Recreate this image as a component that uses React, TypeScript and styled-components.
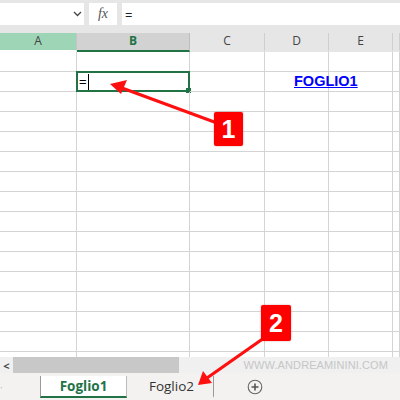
import React, { FunctionComponent } from "react";
import styled, { createGlobalStyle } from "styled-components";

const GlobalStyle = createGlobalStyle`
  html, body {
    margin: 0;
    padding: 0;
    background: #ffffff;
  }
  body {
    font-family: "Open Sans", "Liberation Sans", sans-serif;
  }
`;

const COLS = [
  { label: "A", width: 77 },
  { label: "B", width: 113 },
  { label: "C", width: 75 },
  { label: "D", width: 64 },
  { label: "E", width: 64 },
  { label: "", width: 7 },
];

const ROW_COUNT = 16;

const Sheet = styled.div`
  position: relative;
  width: 400px;
  height: 400px;
  overflow: hidden;
  display: flex;
  flex-direction: column;
`;

const FormulaBar = styled.div`
  height: 33px;
  box-sizing: border-box;
  padding: 3px 0 8px;
  background: #e6e6e6;
  display: flex;
  gap: 5px;
`;

const NameBox = styled.div`
  width: 84px;
  background: #ffffff;
  display: flex;
  align-items: center;
  justify-content: flex-end;
  padding-right: 2px;
  box-sizing: border-box;
`;

const FxBox = styled.div`
  width: 28px;
  background: #ffffff;
  display: flex;
  align-items: center;
  justify-content: center;
  font-family: "Liberation Serif", serif;
  font-style: italic;
  font-size: 14px;
  color: #555;
`;

const FormulaInput = styled.div`
  flex: 1;
  background: #ffffff;
  display: flex;
  align-items: center;
  padding-left: 3px;
  font-size: 13px;
  color: #222;
  padding-top: 2px;
`;

const HeaderRow = styled.div`
  display: flex;
  height: 19px;
  background: #e6e6e6;
`;

const HeaderCell = styled.div<{ $w: number; $state?: "active" | "sel" }>`
  width: ${(p) => p.$w}px;
  flex: none;
  box-sizing: border-box;
  display: flex;
  align-items: center;
  justify-content: center;
  font-size: 12px;
  padding-bottom: 2px;
  color: ${(p) => (p.$state === "active" ? "#217346" : "#444")};
  font-weight: ${(p) => (p.$state === "active" ? 700 : 400)};
  background: ${(p) =>
    p.$state === "active" ? "#d2d2d2" : p.$state === "sel" ? "#9fd5b7" : "#e6e6e6"};
  border-right: 1px solid
    ${(p) => (p.$state === "sel" ? "#c6c6c6" : p.$state ? "#bdbdbd" : "#cfcfcf")};
  border-bottom: 2px solid
    ${(p) => (p.$state === "active" ? "#217346" : p.$state === "sel" ? "#ffffff" : "#e6e6e6")};
`;

const Grid = styled.div`
  height: 305px;
  overflow: hidden;
`;

const Row = styled.div`
  display: flex;
  height: 20px;
`;

const Cell = styled.div<{ $w: number }>`
  position: relative;
  width: ${(p) => p.$w}px;
  flex: none;
  box-sizing: border-box;
  border-right: 1px solid #d4d4d4;
  border-bottom: 1px solid #d4d4d4;
  font-family: "Liberation Sans", Arial, sans-serif;
  font-size: 13px;
  white-space: nowrap;
`;

const ActiveCell = styled.div`
  position: absolute;
  left: -1px;
  top: -1px;
  width: 114px;
  height: 21px;
  box-sizing: border-box;
  border: 2px solid #217346;
  display: flex;
  align-items: center;
  padding-left: 1px;
  font-size: 13px;
  color: #000;
  &::after {
    content: "";
    position: absolute;
    right: -3px;
    bottom: -3px;
    width: 5px;
    height: 5px;
    background: #217346;
  }
`;

const Caret = styled.span`
  display: inline-block;
  width: 1px;
  height: 16px;
  background: #000;
  margin-left: 1px;
`;

const Link = styled.a`
  position: absolute;
  left: 29px;
  top: 1px;
  color: #0000ff;
  font-weight: 700;
  font-size: 14.5px;
  text-decoration: underline;
`;

const ScrollRow = styled.div`
  height: 16px;
  display: flex;
  background: #f0f0f0;
  align-items: stretch;
`;

const ScrollArrow = styled.div`
  width: 13px;
  display: flex;
  align-items: center;
  justify-content: center;
  color: #444;
  font-size: 11px;
  font-weight: 700;
`;

const ScrollThumb = styled.div`
  width: 166px;
  background: #c8c8c8;
`;

const Watermark = styled.div`
  flex: 1;
  display: flex;
  align-items: center;
  justify-content: flex-end;
  padding-right: 12px;
  font-family: "Liberation Sans", Arial, sans-serif;
  font-size: 11px;
  letter-spacing: 0.1px;
  color: #c6c6c6;
`;

const TabRow = styled.div`
  flex: 1;
  display: flex;
  background: #f3f2f1;
  align-items: stretch;
`;

const TabLead = styled.div`
  width: 40px;
  color: #bbb;
  font-size: 10px;
  display: flex;
  align-items: center;
`;

const Tab = styled.div<{ $active?: boolean }>`
  width: 87px;
  box-sizing: border-box;
  display: flex;
  align-items: center;
  justify-content: center;
  font-size: 13.5px;
  margin: 3px 0 2px;
  padding-left: ${(p) => (p.$active ? 0 : 3)}px;
  color: ${(p) => (p.$active ? "#217346" : "#333")};
  font-weight: ${(p) => (p.$active ? 700 : 400)};
  background: ${(p) => (p.$active ? "#ffffff" : "transparent")};
  border-left: ${(p) => (p.$active ? "1px solid #999" : "none")};
  border-bottom: 2px solid ${(p) => (p.$active ? "#217346" : "transparent")};
  border-right: 1px solid ${(p) => (p.$active ? "#bbb" : "#999")};
`;

const AddSheet = styled.div`
  width: 82px;
  display: flex;
  align-items: center;
  justify-content: center;
`;

const Badge = styled.div<{ $x: number; $y: number; $w: number; $h: number }>`
  position: absolute;
  left: ${(p) => p.$x}px;
  top: ${(p) => p.$y}px;
  width: ${(p) => p.$w}px;
  height: ${(p) => p.$h}px;
  background: #ff0000;
  border-radius: 2px;
  color: #ffffff;
  font-family: "Liberation Sans", Arial, sans-serif;
  font-weight: 700;
  font-size: 25px;
  display: flex;
  align-items: center;
  justify-content: center;
  box-shadow: 0 0 2px rgba(160, 0, 0, 0.4);
`;

const Overlay = styled.svg`
  position: absolute;
  left: 0;
  top: 0;
  pointer-events: none;
`;

const Chevron = () => (
  <svg width="9" height="6" viewBox="0 0 9 6">
    <path d="M1 1 L4.5 4.5 L8 1" fill="none" stroke="#444" strokeWidth="1.3" />
  </svg>
);

const PlusCircle = () => (
  <svg width="16" height="16" viewBox="0 0 16 16">
    <circle cx="8" cy="8" r="6.8" fill="none" stroke="#666" strokeWidth="1.1" />
    <path d="M8 4.5 V11.5 M4.5 8 H11.5" stroke="#555" strokeWidth="1.6" />
  </svg>
);

const App: FunctionComponent = () => {
  return (
    <Sheet>
      <GlobalStyle />
      <FormulaBar>
        <NameBox>
          <Chevron />
        </NameBox>
        <FxBox>fx</FxBox>
        <FormulaInput>=</FormulaInput>
      </FormulaBar>
      <HeaderRow>
        {COLS.map((c, i) => (
          <HeaderCell
            key={i}
            $w={c.width}
            $state={i === 0 ? "sel" : i === 1 ? "active" : undefined}
          >
            {c.label}
          </HeaderCell>
        ))}
      </HeaderRow>
      <Grid>
        {Array.from({ length: ROW_COUNT }).map((_, r) => (
          <Row key={r}>
            {COLS.map((c, i) => (
              <Cell key={i} $w={c.width}>
                {r === 1 && i === 1 && (
                  <ActiveCell>
                    =<Caret />
                  </ActiveCell>
                )}
                {r === 1 && i === 3 && <Link href="#">FOGLIO1</Link>}
              </Cell>
            ))}
          </Row>
        ))}
      </Grid>
      <ScrollRow>
        <ScrollArrow>&lt;</ScrollArrow>
        <ScrollThumb />
        <Watermark>WWW.ANDREAMININI.COM</Watermark>
      </ScrollRow>
      <TabRow>
        <TabLead>·</TabLead>
        <Tab $active>Foglio1</Tab>
        <Tab>Foglio2</Tab>
        <AddSheet>
          <PlusCircle />
        </AddSheet>
      </TabRow>

      <Overlay width="400" height="400" viewBox="0 0 400 400">
        <line x1="217" y1="123" x2="122" y2="88" stroke="#ff1010" strokeWidth="3.2" />
        <polygon points="110,84 127,80 121,94" fill="#ff1010" />
        <line x1="264" y1="338" x2="207" y2="378" stroke="#ff1010" strokeWidth="3.2" />
        <polygon points="198,385 203,371 212,383" fill="#ff1010" />
      </Overlay>
      <Badge $x={214} $y={112} $w={29} $h={34}>
        1
      </Badge>
      <Badge $x={261} $y={305} $w={30} $h={36}>
        2
      </Badge>
    </Sheet>
  );
};

export default App;
